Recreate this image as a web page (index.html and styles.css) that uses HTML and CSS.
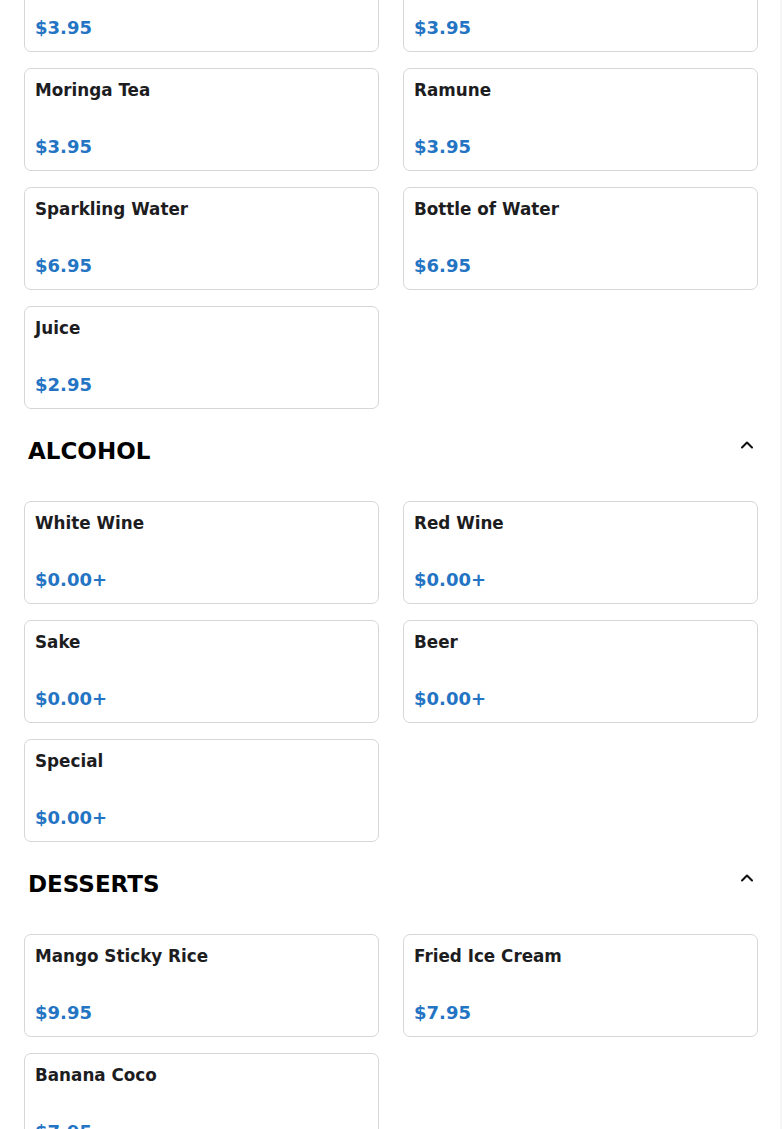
FILE: index.html
```html
<!DOCTYPE html>
<html lang="en">
<head>
    <meta charset="UTF-8">
    <meta name="viewport" content="width=device-width, initial-scale=1.0">
    <title>Menu</title>
    <link rel="stylesheet" href="styles.css">
</head>
<body>
    <div class="menu">
        <!-- drinks (scrolled, top row cut off) -->
        <div class="section section-scrolled">
            <div class="items">
                <div class="item"><div class="item-name">Thai Iced Tea</div><div class="item-price">$3.95</div></div>
                <div class="item"><div class="item-name">Thai Iced Coffee</div><div class="item-price">$3.95</div></div>
                <div class="item"><div class="item-name">Moringa Tea</div><div class="item-price">$3.95</div></div>
                <div class="item"><div class="item-name">Ramune</div><div class="item-price">$3.95</div></div>
                <div class="item"><div class="item-name">Sparkling Water</div><div class="item-price">$6.95</div></div>
                <div class="item"><div class="item-name">Bottle of Water</div><div class="item-price">$6.95</div></div>
                <div class="item"><div class="item-name">Juice</div><div class="item-price">$2.95</div></div>
            </div>
        </div>

        <div class="section">
            <div class="section-header">
                <h2>ALCOHOL</h2>
                <svg class="chevron" width="20" height="20" viewBox="0 0 24 24" fill="none" stroke="currentColor" stroke-width="2.5" stroke-linecap="round" stroke-linejoin="round"><path d="m18 15-6-6-6 6"/></svg>
            </div>
            <div class="items">
                <div class="item"><div class="item-name">White Wine</div><div class="item-price">$0.00+</div></div>
                <div class="item"><div class="item-name">Red Wine</div><div class="item-price">$0.00+</div></div>
                <div class="item"><div class="item-name">Sake</div><div class="item-price">$0.00+</div></div>
                <div class="item"><div class="item-name">Beer</div><div class="item-price">$0.00+</div></div>
                <div class="item"><div class="item-name">Special</div><div class="item-price">$0.00+</div></div>
            </div>
        </div>

        <div class="section">
            <div class="section-header">
                <h2>DESSERTS</h2>
                <svg class="chevron" width="20" height="20" viewBox="0 0 24 24" fill="none" stroke="currentColor" stroke-width="2.5" stroke-linecap="round" stroke-linejoin="round"><path d="m18 15-6-6-6 6"/></svg>
            </div>
            <div class="items">
                <div class="item"><div class="item-name">Mango Sticky Rice</div><div class="item-price">$9.95</div></div>
                <div class="item"><div class="item-name">Fried Ice Cream</div><div class="item-price">$7.95</div></div>
                <div class="item"><div class="item-name">Banana Coco</div><div class="item-price">$7.95</div></div>
            </div>
        </div>
    </div>
</body>
</html>
```

FILE: styles.css
```css
body {
    margin: 0;
    font-family: 'DejaVu Sans', sans-serif;
    background: #fff;
    box-shadow: inset -2px 0 0 #f6f6f6; /* faint scroll edge */
    min-height: 100vh;
}

.menu {
    padding: 0 24px;
}

.section-scrolled {
    margin-top: -51px; /* page is scrolled down a bit */
}

.items {
    display: grid;
    grid-template-columns: 1fr 1fr;
    column-gap: 24px;
    row-gap: 16px;
}

.item {
    height: 103px;
    box-sizing: border-box;
    padding: 11px 10px 13px;
    border: 1px solid #d6d6d6;
    border-radius: 7px;
    display: flex;
    flex-direction: column;
    justify-content: space-between;
}

.item-name {
    font-size: 16.8px;
    font-weight: bold;
    color: #1d1d1f;
}

.item-price {
    font-size: 18px;
    font-weight: bold;
    color: #2474c4;
}

.section-header {
    display: flex;
    justify-content: space-between;
    align-items: flex-start;
    padding: 29px 1px 37px 4px;
}

.section-header h2 {
    margin: 0;
    font-size: 23px;
    font-weight: bold;
    color: #000;
}

.chevron {
    color: #111;
    margin-top: -3px;
}
```
